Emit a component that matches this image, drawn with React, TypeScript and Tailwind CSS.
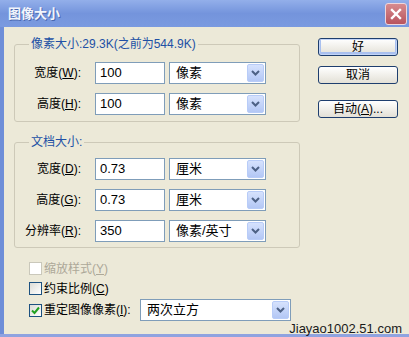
import React from "react";

const Chevron = () => (
  <svg width="9" height="6" viewBox="0 0 9 6">
    <path d="M1 1 L4.5 4.5 L8 1" fill="none" stroke="#4d6185" strokeWidth="2" />
  </svg>
);

function Dropdown({ cls, text }: { cls: string; text: string }) {
  return (
    <div className={`flex h-[22px] items-center border border-[#7f9db9] bg-white pl-[6px] pr-[1px] ${cls}`}>
      <span className="flex-1 text-[13px] leading-[16px] text-black">{text}</span>
      <div className="flex h-[18px] w-[17px] items-center justify-center rounded-[2px] border border-[#b8ccf8] bg-gradient-to-b from-[#d6e2fd] to-[#b3c7f5]">
        <Chevron />
      </div>
    </div>
  );
}

function Row({ label, value, unit }: { label: React.ReactNode; value: string; unit: string }) {
  return (
    <div className="flex h-[22px] items-center">
      <div className="w-[66px] text-right text-[12px] leading-[14px] text-black">{label}</div>
      <div className="ml-[14px] flex h-[22px] w-[70px] items-center border border-[#7f9db9] bg-white pl-[4px] text-[13px] text-black">
        {value}
      </div>
      <Dropdown cls="ml-[4px] w-[97px]" text={unit} />
    </div>
  );
}

function Btn({ children, def }: { children: React.ReactNode; def?: boolean }) {
  return (
    <div
      className={`flex h-[18px] w-[80px] items-center justify-center rounded-[3px] border border-[#1e3e6e] bg-gradient-to-b from-[#ffffff] to-[#e3e0d6] text-[12px] leading-[14px] text-black ${
        def ? "shadow-[inset_0_0_0_1px_#c2d4f7,inset_0_-1px_0_2px_#a9c0ef]" : ""
      }`}
    >
      {children}
    </div>
  );
}

function Check({ checked, disabled }: { checked?: boolean; disabled?: boolean }) {
  return (
    <div
      className={`flex h-[13px] w-[13px] items-center justify-center border ${
        disabled ? "border-[#cac8bb] bg-white" : "border-[#1c5180] bg-gradient-to-br from-[#dcdcd6] to-white"
      }`}
    >
      {checked && (
        <svg width="11" height="11" viewBox="0 0 11 11">
          <path d="M2 5.5 L4.5 8 L9 2.5" fill="none" stroke="#21a121" strokeWidth="2" />
        </svg>
      )}
    </div>
  );
}

export default function App() {
  return (
    <div className="relative flex h-[337px] w-[409px] flex-col overflow-hidden bg-[#6e8ed8] font-['Liberation_Sans','Noto_Sans_CJK_SC',sans-serif]">
      {/* title bar */}
      <div className="flex h-[27px] items-center bg-gradient-to-b from-[#93afea] via-[#7494dc] to-[#7a9ae0] pl-[8px] pr-[2px]">
        <span className="text-[13px] font-bold leading-[16px] text-[#f2f5fc] [text-shadow:1px_1px_0_#4a68b0]">
          图像大小
        </span>
        <div className="ml-auto flex h-[22px] w-[22px] items-center justify-center rounded-[3px] border border-[#eed6dc] bg-gradient-to-b from-[#d78b8f] to-[#b8545e]">
          <svg width="12" height="12" viewBox="0 0 12 12">
            <path d="M2 2 L10 10 M10 2 L2 10" stroke="white" strokeWidth="2.4" strokeLinecap="square" />
          </svg>
        </div>
      </div>

      <div className="flex min-h-0 flex-1">
        <div className="w-[4px] bg-[#6e8ed8]" />
        <div className="flex-1 bg-[#ece9d8] pl-[10px] pt-[10px]">
          <div className="flex">
            <div className="flex flex-col">
              <fieldset className="w-[286px] rounded-[3px] border border-[#cdc9b8] pb-[6px] pt-[11px]">
                <legend className="ml-[14px] px-[2px] text-[12px] leading-[14px] text-[#2150a5]">
                  像素大小:29.3K(之前为544.9K)
                </legend>
                <div className="flex flex-col gap-[9px]">
                  <Row
                    label={
                      <>
                        宽度(<span className="underline">W</span>):
                      </>
                    }
                    value="100"
                    unit="像素"
                  />
                  <Row
                    label={
                      <>
                        高度(<span className="underline">H</span>):
                      </>
                    }
                    value="100"
                    unit="像素"
                  />
                </div>
              </fieldset>

              <fieldset className="mt-[13px] w-[286px] rounded-[3px] border border-[#cdc9b8] pb-[5px] pt-[9px]">
                <legend className="ml-[14px] px-[2px] text-[12px] leading-[14px] text-[#2150a5]">文档大小:</legend>
                <div className="flex flex-col gap-[9px]">
                  <Row
                    label={
                      <>
                        宽度(<span className="underline">D</span>):
                      </>
                    }
                    value="0.73"
                    unit="厘米"
                  />
                  <Row
                    label={
                      <>
                        高度(<span className="underline">G</span>):
                      </>
                    }
                    value="0.73"
                    unit="厘米"
                  />
                  <Row
                    label={
                      <>
                        分辨率(<span className="underline">R</span>):
                      </>
                    }
                    value="350"
                    unit="像素/英寸"
                  />
                </div>
              </fieldset>

              <div className="mt-[14px] flex flex-col pl-[15px]">
                <div className="flex h-[13px] items-center">
                  <Check disabled />
                  <span className="ml-[2px] text-[12px] leading-[14px] text-[#aca899]">
                    缩放样式(<span className="underline">Y</span>)
                  </span>
                </div>
                <div className="mt-[7px] flex h-[13px] items-center">
                  <Check />
                  <span className="ml-[2px] text-[12px] leading-[14px] text-black">
                    约束比例(<span className="underline">C</span>)
                  </span>
                </div>
                <div className="mt-[4px] flex h-[22px] items-center">
                  <Check checked />
                  <span className="ml-[2px] w-[96px] text-[12px] leading-[14px] text-black">
                    重定图像像素(<span className="underline">I</span>):
                  </span>
                  <Dropdown cls="w-[151px]" text="两次立方" />
                </div>
              </div>
            </div>

            <div className="ml-[18px] mt-[1px] flex flex-col">
              <Btn def>好</Btn>
              <div className="mt-[10px]">
                <Btn>取消</Btn>
              </div>
              <div className="mt-[16px]">
                <Btn>
                  自动(<span className="underline">A</span>)...
                </Btn>
              </div>
            </div>
          </div>
        </div>
      </div>
      <div className="h-[3px] bg-[#8fa3e0]" />

      <div className="absolute bottom-[1px] right-[7px] text-[13px] leading-[15px] text-[#1a1a1a]">
        Jiayao1002.51.com
      </div>
    </div>
  );
}
